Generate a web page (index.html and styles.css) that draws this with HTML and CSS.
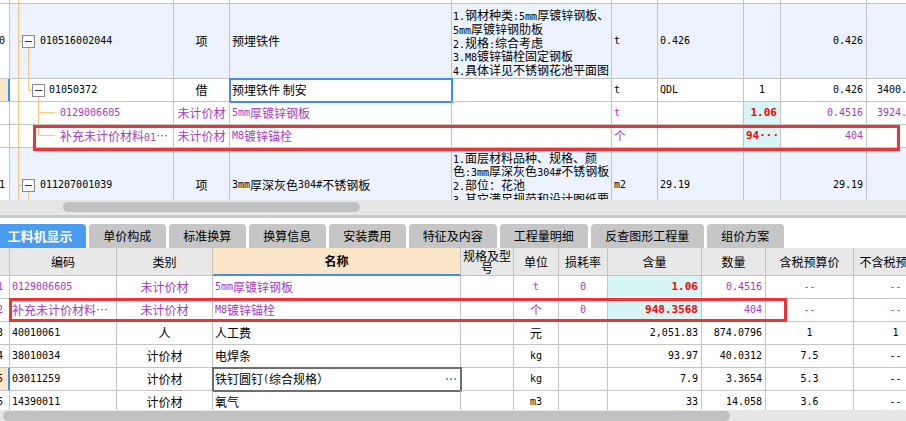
FILE: index.html
```html
<!DOCTYPE html>
<html>
<head>
<meta charset="utf-8">
<link rel="stylesheet" href="styles.css">
</head>
<body>
<div class="app">
  <div class="top">
    <div class="row h4">
      <div class="c c0"></div>
      <div class="c tc"><svg class="tree" width="28" height="3"><path class="ln" d="M8.5 0V3"/></svg></div>
      <div class="c"></div><div class="c"></div><div class="c"></div><div class="c"></div><div class="c"></div><div class="c"></div><div class="c"></div><div class="c"></div>
    </div>
    <div class="row h75 item">
      <div class="c c0 n">10</div>
      <div class="c tc"><svg class="tree" width="28" height="74"><path class="ln" d="M8.5 0V74M8 37.5H12.5M18.5 43.5V74"/><rect class="bx" x="12.5" y="31.5" width="12" height="12"/><path class="mn" d="M15 37.5H22"/></svg><span class="n">010516002044</span></div>
      <div class="c ctr">项</div>
      <div class="c">预埋铁件</div>
      <div class="c feat"><div><span class="a">1.</span>钢材种类<span class="a">:5mm</span>厚镀锌钢板、<br><span class="a">5mm</span>厚镀锌钢肋板<br><span class="a">2.</span>规格<span class="a">:</span>综合考虑<br><span class="a">3.M8</span>镀锌锚栓固定钢板<br><span class="a">4.</span>具体详见不锈钢花池平面图</div></div>
      <div class="c n">t</div>
      <div class="c n">0.426</div>
      <div class="c"></div>
      <div class="c n r">0.426</div>
      <div class="c"></div>
    </div>
    <div class="row h23">
      <div class="c c0 sel"></div>
      <div class="c tc"><svg class="tree" width="37" height="22"><path class="ln" d="M8.5 0V22M18.5 0V11.5H22.5M28.5 17.5V22"/><rect class="bx" x="22.5" y="5.5" width="12" height="12"/><path class="mn" d="M25 11.5H32"/></svg><span class="n">01050372</span></div>
      <div class="c ctr">借</div>
      <div class="c edit">预埋铁件 制安</div>
      <div class="c"></div>
      <div class="c n">t</div>
      <div class="c n">QDL</div>
      <div class="c n ctr">1</div>
      <div class="c n r">0.426</div>
      <div class="c n far">3400.00</div>
    </div>
    <div class="row h23 p">
      <div class="c c0"></div>
      <div class="c tc"><svg class="tree" width="48" height="22"><path class="ln" d="M8.5 0V22M28.5 0V22M28.5 10.5H45"/></svg><span class="n">0129006605</span></div>
      <div class="c ctr">未计价材</div>
      <div class="c"><span class="a">5mm</span>厚镀锌钢板</div>
      <div class="c"></div>
      <div class="c n">t</div>
      <div class="c"></div>
      <div class="c cy r red">1.06</div>
      <div class="c n r">0.4516</div>
      <div class="c n far">3924.00</div>
    </div>
    <div class="row h23 p">
      <div class="c c0"></div>
      <div class="c tc"><svg class="tree" width="48" height="22"><path class="ln" d="M8.5 0V22M28.5 0V10.5H45"/></svg><span>补充未计价材料<span class="a">01</span>…</span></div>
      <div class="c ctr">未计价材</div>
      <div class="c"><span class="a">M8</span>镀锌锚栓</div>
      <div class="c"></div>
      <div class="c">个</div>
      <div class="c"></div>
      <div class="c cy red">94···</div>
      <div class="c n r">404</div>
      <div class="c"></div>
    </div>
    <div class="row h75 item">
      <div class="c c0 n">11</div>
      <div class="c tc"><svg class="tree" width="28" height="74"><path class="ln" d="M8.5 0V74M8 37.5H12.5M18.5 43.5V74"/><rect class="bx" x="12.5" y="31.5" width="12" height="12"/><path class="mn" d="M15 37.5H22"/></svg><span class="n">011207001039</span></div>
      <div class="c ctr">项</div>
      <div class="c"><span class="a">3mm</span>厚深灰色<span class="a">304#</span>不锈钢板</div>
      <div class="c feat f2"><div><span class="a">1.</span>面层材料品种、规格、颜<br>色<span class="a">:3mm</span>厚深灰色<span class="a">304#</span>不锈钢板<br><span class="a">2.</span>部位：花池<br><span class="a">3.</span>其它满足规范和设计图纸要<br>求</div></div>
      <div class="c n">m2</div>
      <div class="c n">29.19</div>
      <div class="c"></div>
      <div class="c n r">29.19</div>
      <div class="c"></div>
    </div>
    <div class="mark m1"></div>
  </div>
  <div class="sb"><div class="thumb"></div></div>
  <div class="split"></div>
  <div class="gap"></div>
  <div class="tabs">
    <div class="tab on">工料机显示</div>
    <div class="tab">单价构成</div>
    <div class="tab">标准换算</div>
    <div class="tab">换算信息</div>
    <div class="tab">安装费用</div>
    <div class="tab w5">特征及内容</div>
    <div class="tab w5">工程量明细</div>
    <div class="tab w7">反查图形工程量</div>
    <div class="tab">组价方案</div>
  </div>
  <div class="bot">
    <div class="row hd">
      <div class="c c0"></div>
      <div class="c">编码</div>
      <div class="c">类别</div>
      <div class="c nm">名称</div>
      <div class="c wrap">规格及型号</div>
      <div class="c">单位</div>
      <div class="c">损耗率</div>
      <div class="c">含量</div>
      <div class="c">数量</div>
      <div class="c">含税预算价</div>
      <div class="c">不含税预算价</div>
    </div>
    <div class="row h23 p">
      <div class="c c0 n">1</div>
      <div class="c n">0129006605</div>
      <div class="c ctr">未计价材</div>
      <div class="c"><span class="a">5mm</span>厚镀锌钢板</div>
      <div class="c"></div>
      <div class="c n ctr">t</div>
      <div class="c n ctr">0</div>
      <div class="c cy r red">1.06</div>
      <div class="c n r">0.4516</div>
      <div class="c n ctr">--</div>
      <div class="c n ctr">--</div>
    </div>
    <div class="row h23 p">
      <div class="c c0 n">2</div>
      <div class="c">补充未计价材料…</div>
      <div class="c ctr">未计价材</div>
      <div class="c"><span class="a">M8</span>镀锌锚栓</div>
      <div class="c"></div>
      <div class="c ctr">个</div>
      <div class="c n ctr">0</div>
      <div class="c cy r red">948.3568</div>
      <div class="c n r">404</div>
      <div class="c n ctr">--</div>
      <div class="c n ctr">--</div>
    </div>
    <div class="row h23">
      <div class="c c0 n">3</div>
      <div class="c n">40010061</div>
      <div class="c ctr">人</div>
      <div class="c">人工费</div>
      <div class="c"></div>
      <div class="c ctr">元</div>
      <div class="c"></div>
      <div class="c n r">2,051.83</div>
      <div class="c n r">874.0796</div>
      <div class="c n ctr">1</div>
      <div class="c n ctr">1</div>
    </div>
    <div class="row h23">
      <div class="c c0 n">4</div>
      <div class="c n">38010034</div>
      <div class="c ctr">计价材</div>
      <div class="c">电焊条</div>
      <div class="c"></div>
      <div class="c n ctr">kg</div>
      <div class="c"></div>
      <div class="c n r">93.97</div>
      <div class="c n r">40.0312</div>
      <div class="c n ctr">7.5</div>
      <div class="c n ctr">--</div>
    </div>
    <div class="row h23">
      <div class="c c0 n sel">5</div>
      <div class="c n">03011259</div>
      <div class="c ctr">计价材</div>
      <div class="c focus">铁钉圆钉<span class="a">(</span>综合规格）<span class="dots">⋯</span></div>
      <div class="c"></div>
      <div class="c n ctr">kg</div>
      <div class="c"></div>
      <div class="c n r">7.9</div>
      <div class="c n r">3.3654</div>
      <div class="c n ctr">5.3</div>
      <div class="c n ctr">--</div>
    </div>
    <div class="row h23">
      <div class="c c0 n">6</div>
      <div class="c n">14390011</div>
      <div class="c ctr">计价材</div>
      <div class="c">氧气</div>
      <div class="c"></div>
      <div class="c n ctr">m3</div>
      <div class="c"></div>
      <div class="c n r">33</div>
      <div class="c n r">14.058</div>
      <div class="c n ctr">3.6</div>
      <div class="c n ctr">--</div>
    </div>
    <div class="mark m2"></div>
  </div>
  <div class="sb sb2"><div class="thumb"></div></div>
</div>
</body>
</html>
```
FILE: styles.css
```css
* { box-sizing: border-box; margin: 0; padding: 0; }
body {
  width: 906px;
  height: 421px;
  overflow: hidden;
  background: #fff;
  color: #000;
  font: 12px/14px "Noto Sans CJK SC", sans-serif;
}
.app {
  display: flex;
  flex-direction: column;
  width: 906px;
  height: 421px;
  overflow: hidden;
}
.top {
  position: relative;
  flex: none;
  height: 200px;
  overflow: hidden;
}
.bot {
  position: relative;
  flex: none;
  height: 162px;
  overflow: hidden;
}
.row { display: grid; }
.top .row { grid-template-columns: 10px 164px 56px 222px 160px 46px 86px 37px 86px 60px; }
.bot .row { grid-template-columns: 10px 107px 96px 248px 53px 45px 49px 94px 64px 88px 84px; }
.h4 { height: 4px; }
.h23 { height: 23px; }
.h75 { height: 75px; }
.hd { height: 28px; }

.c {
  display: flex;
  align-items: center;
  min-width: 0;
  overflow: hidden;
  white-space: nowrap;
  padding: 0 3px 0 2px;
  border-right: 1px solid #c4c4c4;
  border-bottom: 1px solid #c4c4c4;
}
.ctr { justify-content: center; padding: 0 2px; }
.r { justify-content: flex-end; }
.far { padding-left: 10px; }
.c0 { justify-content: flex-end; padding: 0 4px 0 0; background: #fff; }
.bot .c0 { padding-right: 6px; }
.tc { padding: 0; }
.tc .tree { flex: none; margin-right: 2px; }

.n, .a { font-family: "DejaVu Sans Mono", monospace; font-size: 10px; }
.a { line-height: 0; }
.p { color: #a23cc5; }
.item { background: #ecf3fe; }
.cy { background: #d8f6f6; }
.red {
  color: #ff0000;
  font-weight: bold;
  font-family: "DejaVu Sans Mono", "Noto Sans CJK SC", monospace;
  font-size: 11px;
}
.sel { background: #fde5c8; border-right-color: #3d8ef0; box-shadow: inset -1px 0 0 #3d8ef0; }
.edit { outline: 2px solid #3d8ef0; outline-offset: -1px; }
.focus { outline: 2px solid #6e6e6e; outline-offset: -1px; }
.dots { margin-left: auto; color: #4f8fd6; font-weight: bold; }

.feat { padding: 0 1px; line-height: 13.75px; }
.feat > div { white-space: nowrap; padding-top: 3px; }
.f2 > div { padding-top: 0; }

.tree .ln { stroke: #ffc57a; fill: none; }
.tree .bx { stroke: #8a8a8a; fill: #fff; }
.tree .mn { stroke: #333; fill: none; }

.mark { position: absolute; border: 3px solid #ee3333; }
.m1 { left: 33px; top: 125px; width: 867px; height: 26px; }
.m2 { left: 9px; top: 50px; width: 778px; height: 24px; }

.sb { flex: none; height: 15px; background: #e6e6e6; padding: 2px 0 0 63px; }
.thumb { height: 10px; border-radius: 5px; background: #c1c1c1; }
.sb .thumb { width: 297px; }
.sb2 { height: 11px; padding: 1px 0 0 3px; }
.sb2 .thumb { width: 727px; }
.split { flex: none; height: 3px; background: #c9c9c9; }
.gap { flex: none; height: 6px; }

.tabs { flex: none; display: flex; gap: 2.5px; height: 24px; }
.tab {
  width: 77.5px;
  display: flex;
  align-items: center;
  justify-content: center;
  background: #c6c6c6;
  border-radius: 4px 4px 0 0;
  white-space: nowrap;
}
.tab.w5 { width: 88.5px; }
.tab.w7 { width: 113.5px; }
.tab.on {
  width: 86px;
  padding-right: 6px;
  background: #4a9cf0;
  color: #fff;
  font-weight: bold;
  font-size: 13px;
  border-top-left-radius: 0;
}

.hd .c { background: #e8e8e8; justify-content: center; padding: 0 2px; }
.hd .nm { background: #fde5c8; font-weight: bold; border-bottom: 2px solid #3d8ef0; }
.hd .wrap { white-space: normal; text-align: center; line-height: 12px; }
```
